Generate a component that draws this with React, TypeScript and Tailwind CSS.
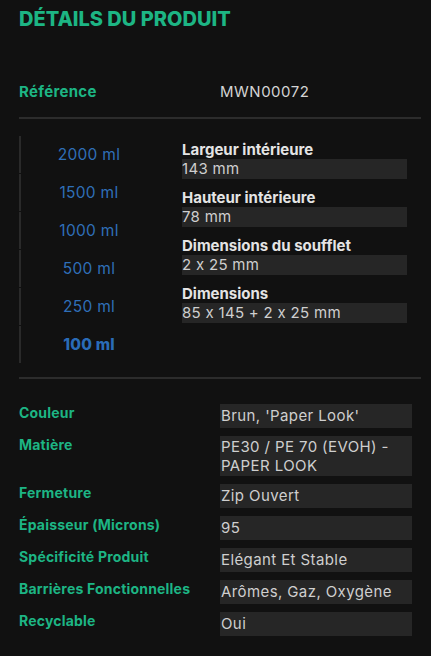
import { Fragment } from 'react'

const SIZES = ['2000 ml', '1500 ml', '1000 ml', '500 ml', '250 ml', '100 ml']

const DIMS = [
  ['Largeur intérieure', '143 mm'],
  ['Hauteur intérieure', '78 mm'],
  ['Dimensions du soufflet', '2 x 25 mm'],
  ['Dimensions', '85 x 145 + 2 x 25 mm'],
]

const SPECS: [string, string[]][] = [
  ['Couleur', ["Brun, 'Paper Look'"]],
  ['Matière', ['PE30 / PE 70 (EVOH) -', 'PAPER LOOK']],
  ['Fermeture', ['Zip Ouvert']],
  ['Épaisseur (Microns)', ['95']],
  ['Spécificité Produit', ['Elégant Et Stable']],
  ['Barrières Fonctionnelles', ['Arômes, Gaz, Oxygène']],
  ['Recyclable', ['Oui']],
]

export default function App() {
  return (
    <div className="w-[431px] h-[656px] bg-[#111111] px-[19px] font-['Inter','Liberation_Sans',sans-serif] [font-feature-settings:'calt'_0] overflow-hidden">
      <h2 className="pt-[6px] text-[20px] leading-[26px] font-extrabold text-[#1db584]">
        DÉTAILS DU PRODUIT
      </h2>

      <div className="mt-[48px] flex items-center h-[24px]">
        <span className="w-[201px] text-[15px] font-bold tracking-[0.3px] text-[#1db584]">Référence</span>
        <span className="text-[15px] tracking-[0.5px] text-[#d4d4d4]">MWN00072</span>
      </div>

      <div className="mt-[13px] mr-[-9px] h-[2px] bg-[#2c2c2c]" />

      <div className="mt-[17px] flex">
        <div className="w-[136px] flex flex-col gap-[1px]">
          {SIZES.map((s, i) => (
            <div
              key={s}
              className="h-[37px] border-l-2 border-[#2a2a2a] flex items-center justify-center pl-[2px]"
            >
              <span
                className={
                  i === SIZES.length - 1
                    ? 'text-[15.5px] font-extrabold tracking-[0.2px] text-[#2a6cb8]'
                    : 'text-[15.5px] tracking-[0.3px] text-[#2f6fb8]'
                }
              >
                {s}
              </span>
            </div>
          ))}
        </div>

        <div className="ml-[27px] w-[225px] pt-[4px] flex flex-col gap-[9px]">
          {DIMS.map(([label, value]) => (
            <div key={label}>
              <p className="text-[15px] leading-[19px] font-bold text-[#e4e4e4]">{label}</p>
              <p className="h-[20px] leading-[20px] bg-[#262626] text-[15px] tracking-[0.3px] text-[#cfcfcf]">
                {value}
              </p>
            </div>
          ))}
        </div>
      </div>

      <div className="mt-[14px] mr-[-9px] h-[2px] bg-[#2c2c2c]" />

      <div className="mt-[25px] flex flex-col gap-[8px]">
        {SPECS.map(([label, lines]) => (
          <div key={label} className="flex items-start">
            <span className="w-[201px] shrink-0 text-[14px] leading-[18px] font-bold tracking-[0.2px] text-[#1db584]">
              {label}
            </span>
            <span
              className={
                lines.length > 1
                  ? 'w-[192px] bg-[#262626] px-[1px] py-[1px] text-[15px] leading-[19px] tracking-[0.4px] text-[#cfcfcf]'
                  : 'w-[192px] bg-[#262626] px-[1px] py-[2px] text-[15px] leading-[20px] tracking-[0.4px] text-[#cfcfcf]'
              }
            >
              {lines.map((l, i) => (
                <Fragment key={l}>
                  {i > 0 && <br />}
                  {l}
                </Fragment>
              ))}
            </span>
          </div>
        ))}
      </div>
    </div>
  )
}
